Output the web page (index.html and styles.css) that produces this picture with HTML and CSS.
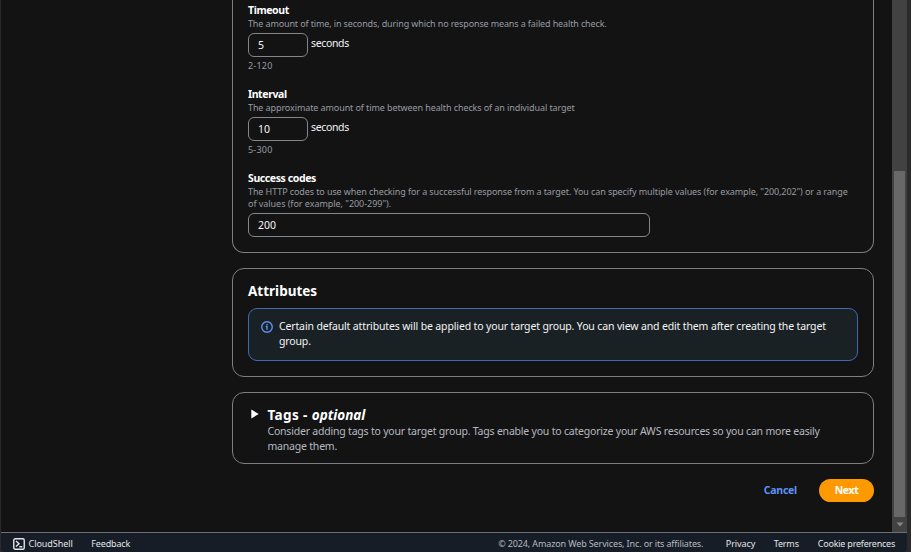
FILE: index.html
```html
<!DOCTYPE html>
<html lang="en">
<head>
<meta charset="utf-8">
<title>Create target group</title>
<link rel="stylesheet" href="styles.css">
</head>
<body>
<div class="window">
  <div class="viewport">
    <main class="content">
      <section class="card health">
        <div class="field">
          <div class="label">Timeout</div>
          <div class="desc timeout-desc">The amount of time, in seconds, during which no response means a failed health check.</div>
          <div class="row"><div class="input small">5</div><span class="unit">seconds</span></div>
          <div class="hint">2-120</div>
        </div>
        <div class="field">
          <div class="label">Interval</div>
          <div class="desc">The approximate amount of time between health checks of an individual target</div>
          <div class="row"><div class="input small">10</div><span class="unit">seconds</span></div>
          <div class="hint">5-300</div>
        </div>
        <div class="field">
          <div class="label">Success codes</div>
          <div class="desc">The HTTP codes to use when checking for a successful response from a target. You can specify multiple values (for example, "200,202") or a range<br><span class="desc-end">of values (for example, "200-299").</span></div>
          <div class="row"><div class="input wide">200</div></div>
        </div>
      </section>
      <section class="card attributes">
        <h2>Attributes</h2>
        <div class="alert">
          <svg class="info" viewBox="0 0 12 12"><circle cx="6" cy="6" r="5.25"/><path d="M6 3v1.3M4.8 5.5H6V8.7"/></svg>
          <p>Certain default attributes will be applied to your target group. You can view and edit them after creating the target<br>group.</p>
        </div>
      </section>
      <section class="card tags">
        <svg class="caret" viewBox="0 0 8 10"><path d="M0.3 0.5L7.7 5L0.3 9.5Z"/></svg>
        <div>
          <h2>Tags - <em>optional</em></h2>
          <p>Consider adding tags to your target group. Tags enable you to categorize your AWS resources so you can more easily<br>manage them.</p>
        </div>
      </section>
      <div class="actions"><a class="cancel">Cancel</a><button class="next">Next</button></div>
    </main>
    <div class="scrollbar"><div class="thumb"></div><svg class="down" viewBox="0 0 8 5"><path d="M0.5 0.5h7L4 4.5Z"/></svg></div>
  </div>
  <footer class="footer">
    <svg class="shell" viewBox="0 0 12 12"><rect x=".75" y=".75" width="10.5" height="10.5" rx="1.5"/><path d="M3 3l3 2.8L3 8.6M6.3 8.7h3"/></svg>
    <span class="cloud">CloudShell</span>
    <span class="feedback">Feedback</span>
    <span class="copy">© 2024, Amazon Web Services, Inc. or its affiliates.</span>
    <span class="privacy">Privacy</span>
    <span class="terms">Terms</span>
    <span class="cookie">Cookie preferences</span>
  </footer>
</div>
</body>
</html>
```
FILE: styles.css
```css
* { box-sizing: border-box; }
html, body { margin: 0; height: 100%; overflow: hidden; }
body {
  background: #2a2a2a;
  font-family: "Noto Sans", "Open Sans", sans-serif;
  font-size: 10.5px;
  color: #f4f4f5;
  white-space: nowrap;
}
h2, p { margin: 0; }
.window { margin: 0 4px 0 1px; height: 552px; display: flex; flex-direction: column; }
.viewport { height: 532px; display: flex; background: #131313; }
.content { flex: 1; min-width: 0; padding: 0 18px 0 231px; display: flex; flex-direction: column; gap: 15px; }
.card { border: 1px solid #7d7f82; border-radius: 12px; padding: 15px; }
.health { height: 253px; border-top: 0; border-radius: 0 0 12px 12px; padding-top: 3px; display: flex; flex-direction: column; gap: 15px; }
.label { height: 15px; line-height: 15px; font-weight: 700; letter-spacing: -0.4px; color: #fff; }
.desc, .hint { font-size: 9px; line-height: 12px; color: #979ba2; }
.desc { letter-spacing: -0.097px; }
.desc-end { letter-spacing: -0.04px; }
.timeout-desc { letter-spacing: -0.13px; }
.row { display: flex; gap: 3px; margin-top: 3px; }
.input { height: 24px; border: 1px solid #84868b; border-radius: 6px; padding: 0 9px; line-height: 22px; }
.small { width: 60px; }
.wide { width: 402px; }
.unit { line-height: 20px; letter-spacing: -0.35px; }
.hint { margin-top: 3px; letter-spacing: 0.2px; }
.attributes { height: 109px; padding-top: 13px; }
h2 { font-size: 13.5px; line-height: 18px; color: #fff; }
.alert { margin-top: 8px; height: 53px; border: 1px solid #4069b5; border-radius: 9px; background: #1a2124; padding: 10px 12px; display: flex; gap: 6px; line-height: 15px; letter-spacing: -0.14px; }
.info { flex: none; width: 12px; height: 12px; margin-top: 2px; fill: none; stroke: #5c92f5; stroke-width: 1.4; }
.tags { height: 72px; padding: 13px 18px; display: flex; gap: 8.5px; }
.tags h2 { letter-spacing: 0.4px; }
.tags em { letter-spacing: 0; }
.caret { flex: none; width: 8px; height: 10px; margin-top: 3px; fill: #fff; }
.tags p { line-height: 15px; letter-spacing: -0.205px; color: #b6bac0; }
.actions { display: flex; justify-content: flex-end; gap: 22px; line-height: 23px; font-weight: 700; letter-spacing: -0.25px; }
.cancel { color: #5c92f5; }
.next { width: 55px; height: 23px; border: 0; border-radius: 12px; background: #ff9900; color: #fff; font: inherit; letter-spacing: -0.4px; padding: 0; }
.scrollbar { flex: none; width: 15px; background: #424242; padding: 171px 2px 0; display: flex; flex-direction: column; align-items: center; }
.thumb { width: 11px; height: 346px; background: #686868; }
.down { width: 8px; height: 5px; margin-top: 5px; fill: #868686; }
.footer { height: 20px; border-top: 1px solid #6b6f77; background: #161d26; border-radius: 0 0 4px 4px; display: flex; align-items: center; padding: 2px 12px 0; font-size: 9px; color: #e3e5e8; }
.shell { width: 12px; height: 12px; margin-right: 3.5px; fill: none; stroke: #e3e5e8; stroke-width: 1.4; }
.cloud { letter-spacing: -0.05px; }
.feedback { margin-left: 18.5px; letter-spacing: -0.15px; }
.copy { margin-left: auto; letter-spacing: -0.13px; color: #b6bac0; }
.privacy { margin-left: 22.5px; letter-spacing: -0.1px; }
.terms { margin-left: 18.5px; letter-spacing: -0.15px; }
.cookie { margin-left: 19px; letter-spacing: -0.23px; }
```
